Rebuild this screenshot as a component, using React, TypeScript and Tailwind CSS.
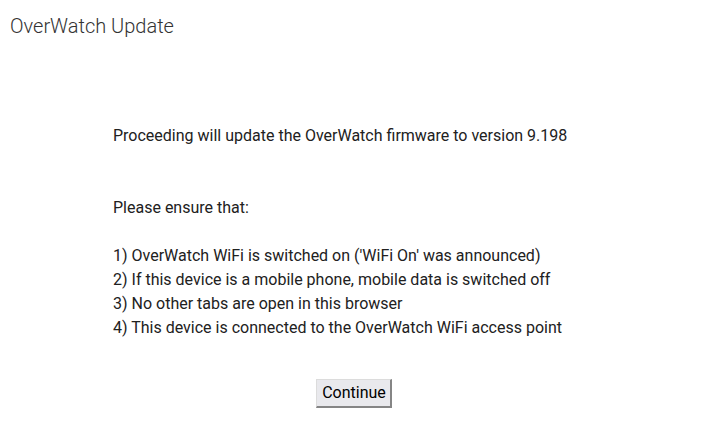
export default function App() {
  return (
    <div className="min-h-[435px] bg-white text-[#212121]" style={{ fontFamily: "Roboto, sans-serif" }}>
      <div className="pl-[10px] pt-[12px] text-[20px] leading-[28px] font-light text-[#333]">OverWatch Update</div>
      <div className="ml-[113px] mt-[84px] text-[16px] leading-[24px]">
        <p>Proceeding will update the OverWatch firmware to version 9.198</p>
        <p className="mt-[48px]">Please ensure that:</p>
        <div className="mt-[24px]">
          <p>1) OverWatch WiFi is switched on ('WiFi On' was announced)</p>
          <p>2) If this device is a mobile phone, mobile data is switched off</p>
          <p>3) No other tabs are open in this browser</p>
          <p>4) This device is connected to the OverWatch WiFi access point</p>
        </div>
      </div>
      <div className="mt-[39px] flex justify-center">
        <button className="ml-[4px] h-[29px] pl-[5px] pr-[4px] text-[16px] leading-[20px] text-black bg-[#e9e9ed] border-t border-l border-r-2 border-b-2 border-t-[#dcdcdc] border-l-[#dcdcdc] border-r-[#858585] border-b-[#858585]">
          Continue
        </button>
      </div>
    </div>
  );
}
